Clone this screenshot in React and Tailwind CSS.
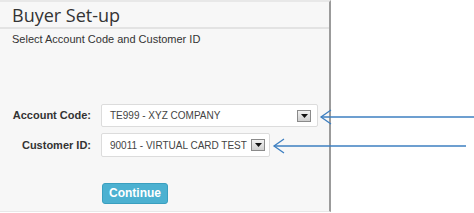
export default function App() {
  const DropBtn = () => (
    <span className="flex h-[12px] w-[14px] shrink-0 items-center justify-center border border-[#8a8a8a] bg-gradient-to-b from-[#f2f2f2] to-[#cfcfcf]">
      <svg width="7" height="4" viewBox="0 0 7 4">
        <path d="M0 0h7L3.5 4z" fill="#111" />
      </svg>
    </span>
  );

  return (
    <div className="relative flex h-[213px] w-[474px] overflow-hidden bg-white" style={{ fontFamily: '"Liberation Sans", Arial, sans-serif' }}>
      {/* Panel */}
      <div className="flex h-[212px] w-[331px] flex-col border-r-2 border-b border-t-2 border-[#e8e8e8] border-r-[#9b9b9b] bg-[#f7f7f7]">
        <div className="flex h-[27px] items-center border-b-2 border-[#e3e3e3] pl-3 text-[18px] leading-none text-[#333]" style={{ fontFamily: '"Open Sans", "Noto Sans", sans-serif' }}>
          Buyer Set-up
        </div>
        <p className="pl-3 pt-[4px] text-[11px] leading-[13px] text-[#333]">Select Account Code and Customer ID</p>

        <div className="mt-[58px] grid grid-cols-[91px_auto] items-center gap-x-[10px] gap-y-[6px]">
          <span className="text-right text-[11px] font-bold text-[#333]">Account Code:</span>
          <div className="flex h-[23px] w-[217px] items-center justify-between rounded-[2px] border border-[#dcdcdc] bg-white pl-[8px] pr-[6px] text-[10px] text-[#444]">
            <span className="whitespace-nowrap">TE999 - XYZ COMPANY</span>
            <DropBtn />
          </div>
          <span className="text-right text-[11px] font-bold text-[#333]">Customer ID:</span>
          <div className="flex h-[24px] w-[169px] items-center justify-between rounded-[2px] border border-[#dcdcdc] bg-white pl-[8px] pr-[4px] text-[10px] text-[#444]">
            <span className="whitespace-nowrap">90011 - VIRTUAL CARD TEST</span>
            <DropBtn />
          </div>
        </div>

        <div className="mt-[23px] pl-[102px]">
          <button className="h-[21px] w-[66px] rounded-[3px] border border-[#3a9fbf] bg-[#4cb1d1] text-[12px] font-bold text-white">
            Continue
          </button>
        </div>
      </div>

      {/* Annotation arrows */}
      <svg className="absolute left-0 top-0" width="474" height="213" viewBox="0 0 474 213">
        <g stroke="#3d7fc1" strokeWidth="1.3" fill="none">
          <path d="M321 117H474" />
          <path d="M331 110L321 117L331 124" />
          <path d="M274 146H466" />
          <path d="M284 139L274 146L284 153" />
        </g>
      </svg>
    </div>
  );
}
